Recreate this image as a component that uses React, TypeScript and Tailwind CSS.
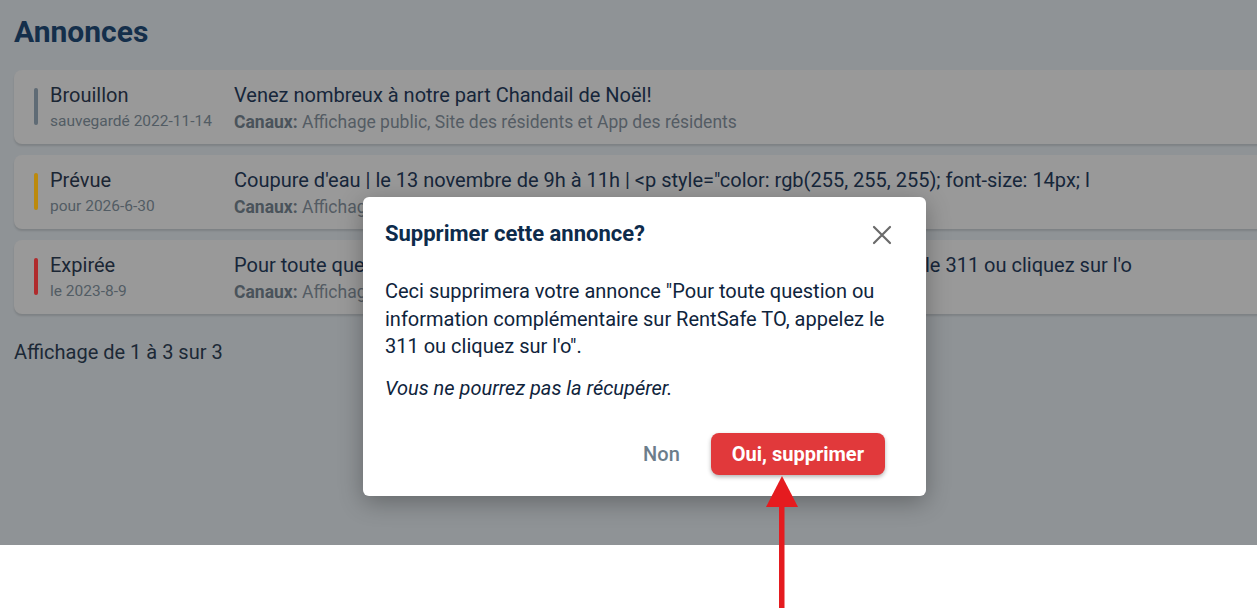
import React from "react";

type Row = {
  status: string;
  sub: string;
  bar: string;
  title: string;
};

const rows: Row[] = [
  {
    status: "Brouillon",
    sub: "sauvegardé 2022-11-14",
    bar: "bg-[#5f6b75]",
    title: "Venez nombreux à notre part Chandail de Noël!",
  },
  {
    status: "Prévue",
    sub: "pour 2026-6-30",
    bar: "bg-[#bc8a0d]",
    title:
      'Coupure d\'eau | le 13 novembre de 9h à 11h | <p style="color: rgb(255, 255, 255); font-size: 14px; l',
  },
  {
    status: "Expirée",
    sub: "le 2023-8-9",
    bar: "bg-[#b02b2d]",
    title:
      "Pour toute question ou information complémentaire sur RentSafe TO, appelez le 311 ou cliquez sur l'o",
  },
];

function Card({ row }: { row: Row }) {
  return (
    <div className="flex h-[74px] items-start rounded-l-[8px] bg-[#999999] pl-[20px] pt-[12px] shadow-[0_2px_2px_rgba(0,0,0,0.12)]">
      <div className={`mt-[6px] h-[37px] w-[4px] shrink-0 rounded-full ${row.bar}`} />
      <div className="ml-[12px] w-[184px] shrink-0">
        <div className="text-[20px] leading-[26px] text-[#1b2634]">{row.status}</div>
        <div className="mt-[3px] whitespace-nowrap text-[15.5px] leading-[20px] text-[#525c64]">{row.sub}</div>
      </div>
      <div className="min-w-0 flex-1">
        <div className="whitespace-nowrap text-[20px] leading-[26px] text-[#16263a]">{row.title}</div>
        <div className="mt-[3px] whitespace-nowrap text-[17.5px] leading-[22px] text-[#545c64]">
          <span className="font-bold text-[#4a535b]">Canaux:</span> Affichage public, Site des résidents et App des
          résidents
        </div>
      </div>
    </div>
  );
}

export default function App() {
  return (
    <div className="relative h-[608px] w-[1257px] overflow-hidden bg-white font-['Roboto',sans-serif]">
      <div className="relative h-[545px] bg-[#8f9396] pl-[14px] pt-[14px]">
        <h1 className="text-[30px] font-bold leading-[36px] text-[#142f4b]">Annonces</h1>
        <div className="mr-[-10px] mt-[20px] flex flex-col gap-[11px]">
          {rows.map((r) => (
            <Card key={r.status} row={r} />
          ))}
        </div>
        <div className="mt-[26px] text-[20px] leading-[24px] text-[#1c2936]">Affichage de 1 à 3 sur 3</div>

        <div className="absolute left-[363px] top-[197px] w-[563px] rounded-[6px] bg-white pb-[21px] shadow-[0_6px_24px_rgba(0,0,0,0.3)]">
          <div className="flex items-center justify-between pl-[22px] pr-[34px] pt-[23px]">
            <h2 className="text-[22px] font-bold leading-[28px] text-[#0d2b4b]">Supprimer cette annonce?</h2>
            <svg width="20" height="20" viewBox="0 0 20 20" className="mt-[2px]">
              <path d="M2 2 L18 18 M18 2 L2 18" stroke="#6a6a6a" strokeWidth="2.2" strokeLinecap="round" />
            </svg>
          </div>
          <div className="mt-[30px] pl-[22px] pr-[20px] text-[20px] leading-[27.5px] text-[#0f243c]">
            <p>
              Ceci supprimera votre annonce "Pour toute question ou information complémentaire sur RentSafe TO, appelez
              le 311 ou cliquez sur l'o".
            </p>
            <p className="mt-[14px] italic">Vous ne pourrez pas la récupérer.</p>
          </div>
          <div className="mt-[31px] flex items-center justify-end gap-[31px] pr-[41px]">
            <button className="text-[20px] font-medium text-[#6c7d8b]">Non</button>
            <button className="h-[42px] rounded-[8px] bg-[#e1393b] px-[21px] text-[20px] font-bold text-white shadow-[0_2px_4px_rgba(0,0,0,0.3)]">
              Oui, supprimer
            </button>
          </div>
        </div>
      </div>

      <svg className="absolute left-[760px] top-[474px]" width="44" height="134" viewBox="0 0 44 134">
        <polygon points="22,2 6,33 38,33" fill="#e51b1f" />
        <rect x="19" y="30" width="5.5" height="104" fill="#e51b1f" />
      </svg>
    </div>
  );
}
